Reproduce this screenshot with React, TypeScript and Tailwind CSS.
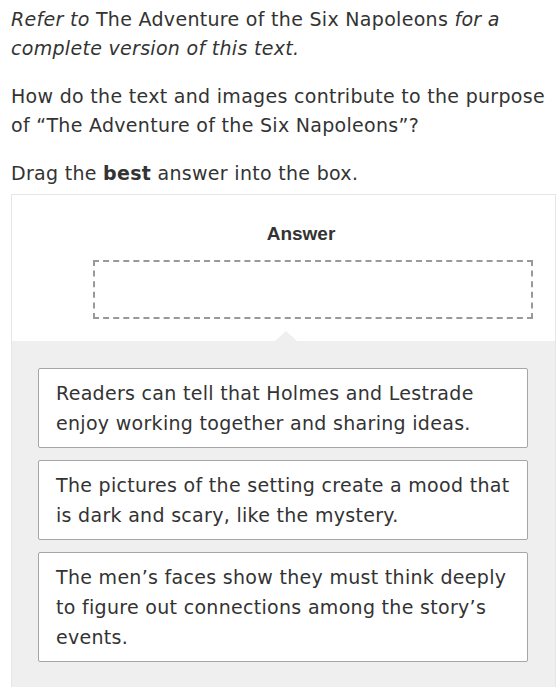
import React from 'react';

const choices = [
  'Readers can tell that Holmes and Lestrade enjoy working together and sharing ideas.',
  'The pictures of the setting create a mood that is dark and scary, like the mystery.',
  'The men\u2019s faces show they must think deeply to figure out connections among the story\u2019s events.',
];

const App: React.FC = () => {
  return (
    <div className="min-h-screen bg-white text-[#333] font-['DejaVu_Sans',sans-serif] text-[19px] tracking-[0.3px] leading-[29px]">
      <div className="pl-[11px] pr-[3px] pt-[5px]">
        <p>
          <em>Refer to</em> The Adventure of the Six Napoleons <em>for a complete version of this text.</em>
        </p>
        <p className="mt-[19px]">
          How do the text and images contribute to the purpose of &ldquo;The Adventure of the Six Napoleons&rdquo;?
        </p>
        <p className="mt-[19px]">
          Drag the <strong>best</strong> answer into the box.
        </p>

        {/* drop zone + choice pool */}
        <div className="mt-[6px] border border-[#e6e6e6] border-b-0">
          <div className="relative bg-white pt-[25px] pb-[22px]">
            <div className="text-center font-['Liberation_Sans',sans-serif] font-bold text-[19px] tracking-normal leading-[28px] text-[#333] pl-[35px]">
              Answer
            </div>
            <div className="ml-[81px] mr-[22px] mt-[12px] h-[59px] border-2 border-dashed border-[#999]" />
            {/* caret */}
            <div className="absolute left-[263px] bottom-0 w-0 h-0 border-l-[11px] border-r-[11px] border-b-[10px] border-l-transparent border-r-transparent border-b-[#efefef]" />
          </div>
          <div className="bg-[#efefef] pt-[27px] pb-[40px] pl-[26px] pr-[27px] flex flex-col gap-[12px]">
            {choices.map((c, i) => (
              <div key={i} className="bg-white border border-[#a6a6a6] rounded-[2px] px-[17px] pt-[9px] pb-[9px] leading-[30px]">
                {c}
              </div>
            ))}
          </div>
        </div>
      </div>
    </div>
  );
};

export default App;
